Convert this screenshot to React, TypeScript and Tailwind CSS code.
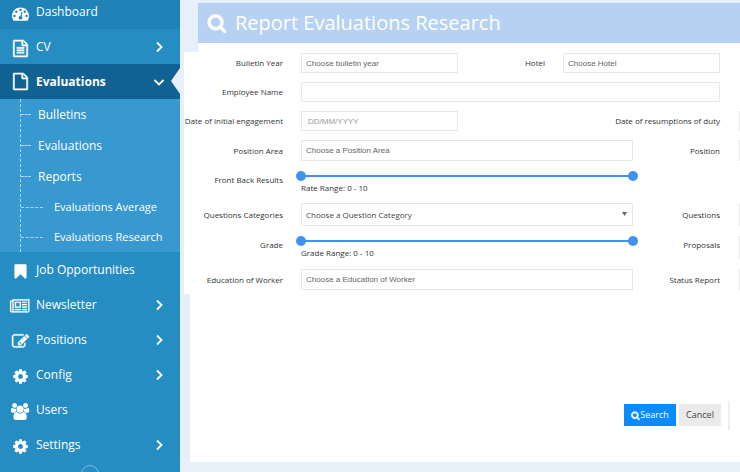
import { useState, type ReactNode } from "react";

const FILE_OUTLINE =
  "M1596 380q28 28 48 76t20 88v1152q0 40-28 68t-68 28h-1344q-40 0-68-28t-28-68v-1600q0-40 28-68t68-28h896q40 0 88 20t76 48zm-444-244v376h376q-10-29-22-41l-313-313q-12-12-41-22zm384 1528v-1024h-416q-40 0-68-28t-28-68v-416h-768v1536h1280z";

// Glyphs on a 1792 unit em; a few are wider than the em.
const ICONS = {
  dashboard: {
    width: 1792,
    d: "M384 1152q0-53-37.5-90.5t-90.5-37.5-90.5 37.5-37.5 90.5 37.5 90.5 90.5 37.5 90.5-37.5 37.5-90.5zm192-448q0-53-37.5-90.5t-90.5-37.5-90.5 37.5-37.5 90.5 37.5 90.5 90.5 37.5 90.5-37.5 37.5-90.5zm428 481l101-382q6-26-7.5-48.5t-38.5-29.5-48 6.5-30 39.5l-101 382q-60 5-107 43.5t-63 98.5q-20 77 20 146t117 89 146-20 89-117q16-60-6-117t-72-91zm660-33q0-53-37.5-90.5t-90.5-37.5-90.5 37.5-37.5 90.5 37.5 90.5 90.5 37.5 90.5-37.5 37.5-90.5zm-640-640q0-53-37.5-90.5t-90.5-37.5-90.5 37.5-37.5 90.5 37.5 90.5 90.5 37.5 90.5-37.5 37.5-90.5zm448 192q0-53-37.5-90.5t-90.5-37.5-90.5 37.5-37.5 90.5 37.5 90.5 90.5 37.5 90.5-37.5 37.5-90.5zm320 448q0 261-141 483-19 29-54 29h-1402q-35 0-54-29-141-221-141-483 0-182 71-348t191-286 286-191 348-71 348 71 286 191 191 286 71 348z",
  },
  file: { width: 1792, d: FILE_OUTLINE },
  fileText: {
    width: 1792,
    d: FILE_OUTLINE + "M512 768h768v128h-768zM512 1024h768v128h-768zM512 1280h768v128h-768z",
  },
  bookmark: {
    width: 1792,
    d: "M1420 128q23 0 44 9 33 13 52.5 41t19.5 62v1289q0 34-19.5 62t-52.5 41q-19 8-44 8-48 0-83-32l-441-424-441 424q-36 33-83 33-23 0-44-9-33-13-52.5-41t-19.5-62v-1289q0-34 19.5-62t52.5-41q21-9 44-9h1048z",
  },
  newspaper: {
    width: 2048,
    d: "M1024 512h-384v384h384v-384zm128 640v128h-640v-128h640zm0-768v640h-640v-640h640zm640 768v128h-512v-128h512zm0-256v128h-512v-128h512zm0-256v128h-512v-128h512zm0-256v128h-512v-128h512zm-1536 960v-960h-128v960q0 26 19 45t45 19 45-19 19-45zm1664 0v-1088h-1536v1088q0 33-11 64h1483q26 0 45-19t19-45zm128-1216v1216q0 80-56 136t-136 56h-1664q-80 0-136-56t-56-136v-1088h256v-128h1792z",
  },
  edit: {
    width: 1792,
    d: "M888 1184l116-116-152-152-116 116v56h96v96h56zm440-720q-16-16-33 1l-350 350q-17 17-1 33t33-1l350-350q17-17 1-33zm80 594v190q0 119-84.5 203.5t-203.5 84.5h-832q-119 0-203.5-84.5t-84.5-203.5v-832q0-119 84.5-203.5t203.5-84.5h832q63 0 117 25 15 7 18 23 3 17-9 29l-49 49q-14 14-32 8-23-6-45-6h-832q-66 0-113 47t-47 113v832q0 66 47 113t113 47h832q66 0 113-47t47-113v-126q0-13 9-22l64-64q15-15 35-7t20 29zm-96-738l288 288-672 672h-288v-288zm444 132l-92 92-288-288 92-92q28-28 68-28t68 28l152 152q28 28 28 68t-28 68z",
  },
  cog: {
    width: 1792,
    d: "M1152 896q0-106-75-181t-181-75-181 75-75 181 75 181 181 75 181-75 75-181zm512-109v222q0 12-8 23t-20 13l-185 28q-19 54-39 91 35 50 107 138 10 12 10 25t-9 23q-27 37-99 108t-94 71q-12 0-26-9l-138-108q-44 23-91 38-16 136-29 186-7 28-36 28h-222q-14 0-24.5-8.5t-11.5-21.5l-28-184q-49-16-90-37l-141 107q-10 9-25 9-14 0-25-11-126-114-165-168-7-10-7-23 0-12 8-23 15-21 51-66.5t54-70.5q-27-50-41-99l-183-27q-13-2-21-12.5t-8-23.5v-222q0-12 8-23t19-13l186-28q14-46 39-92-40-57-107-138-10-12-10-24 0-10 9-23 26-36 98.5-107.5t94.5-71.5q13 0 26 10l138 107q44-23 91-38 16-136 29-186 7-28 36-28h222q14 0 24.5 8.5t11.5 21.5l28 184q49 16 90 37l142-107q9-9 24-9 13 0 25 10 129 119 165 170 7 8 7 22 0 12-8 23-15 21-51 66.5t-54 70.5q26 50 41 98l183 28q13 2 21 12.5t8 23.5z",
  },
  users: {
    width: 1920,
    d: "M593 896q-162 5-265 128h-134q-82 0-138-40.5t-56-118.5q0-353 124-353 6 0 43.5 21t97.5 42.5 119 21.5q67 0 133-23-5 37-5 66 0 139 81 256zm1071 637q0 120-73 189.5t-194 69.5h-874q-121 0-194-69.5t-73-189.5q0-53 3.5-103.5t14-109 26.5-108.5 43-97.5 62-81 85.5-53.5 111.5-20q10 0 43 21.5t73 48 107 48 135 21.5 135-21.5 107-48 73-48 43-21.5q61 0 111.5 20t85.5 53.5 62 81 43 97.5 26.5 108.5 14 109 3.5 103.5zm-1024-1277q0 106-75 181t-181 75-181-75-75-181 75-181 181-75 181 75 75 181zm704 384q0 159-112.5 271.5t-271.5 112.5-271.5-112.5-112.5-271.5 112.5-271.5 271.5-112.5 271.5 112.5 112.5 271.5zm576 225q0 78-56 118.5t-138 40.5h-134q-103-123-265-128 81-117 81-256 0-29-5-66 66 23 133 23 59 0 119-21.5t97.5-42.5 43.5-21q124 0 124 353zm-128-609q0 106-75 181t-181 75-181-75-75-181 75-181 181-75 181 75 75 181z",
  },
  search: {
    width: 1792,
    d: "M1216 832q0-185-131.5-316.5t-316.5-131.5-316.5 131.5-131.5 316.5 131.5 316.5 316.5 131.5 316.5-131.5 131.5-316.5zm512 832q0 52-38 90t-90 38q-54 0-90-38l-343-342q-179 124-399 124-143 0-273.5-55.5t-225-150-150-225-55.5-273.5 55.5-273.5 150-225 225-150 273.5-55.5 273.5 55.5 225 150 150 225 55.5 273.5q0 220-124 399l343 343q37 37 37 90z",
  },
};

type IconName = keyof typeof ICONS;

interface IconProps {
  name: IconName;
  className: string;
  weight?: number;
}

// weight thickens the glyph, in em units, so that outlines hold up at small sizes.
function Icon({ name, className, weight = 0 }: IconProps) {
  const { width, d } = ICONS[name];
  return (
    <svg
      viewBox={`0 0 ${width} 1792`}
      className={`overflow-visible ${className}`}
      fill="currentColor"
      stroke="currentColor"
      strokeWidth={weight}
      aria-hidden
    >
      <path d={d} />
    </svg>
  );
}

function Chevron({ down }: { down?: boolean }) {
  return (
    <svg viewBox="0 0 12 12" className="size-3 shrink-0" fill="none" stroke="currentColor" strokeWidth={1.8} aria-hidden>
      <path d={down ? "M1.5 4l4.5 4.5L10.5 4" : "M4 1.5l4.5 4.5L4 10.5"} />
    </svg>
  );
}

interface NavItemProps {
  icon: IconName;
  label: string;
  weight?: number;
  expandable?: boolean;
}

function NavItem({ icon, label, weight, expandable }: NavItemProps) {
  return (
    <a href="#" className="flex h-[35px] items-center pr-[15px] hover:bg-[#1f83b7]">
      <span className="flex w-9 shrink-0 justify-center pt-[3px] pl-1">
        <Icon name={icon} weight={weight} className="h-[17px] w-auto" />
      </span>
      <span className="flex-1">{label}</span>
      {expandable && <Chevron />}
    </a>
  );
}

function SubItem({ label, nested }: { label: string; nested?: boolean }) {
  return (
    <a href="#" className={nested ? "flex h-[30px] items-center" : "flex h-[31px] items-center"}>
      <span
        className={
          nested
            ? "mr-[11px] w-[22px] border-t border-dashed border-white/60"
            : "mr-[7px] w-[10px] border-t border-dashed border-white/60"
        }
      />
      <span className={nested ? "text-[11px]" : ""}>{label}</span>
    </a>
  );
}

function Sidebar() {
  return (
    <nav className="w-[180px] shrink-0 overflow-hidden bg-[#258dc1] text-[12px] leading-4 text-white">
      <div className="-mt-[6px]">
        <NavItem icon="dashboard" label="Dashboard" />
      </div>
      <NavItem icon="fileText" label="CV" weight={60} expandable />
      <a href="#" aria-expanded className="relative flex h-[35px] items-center bg-[#0f6291] pr-[15px] font-bold">
        <span className="flex w-9 shrink-0 justify-center pl-1">
          <Icon name="file" weight={60} className="h-[17px] w-auto" />
        </span>
        <span className="flex-1">Evaluations</span>
        <Chevron down />
        <svg viewBox="0 0 9 26" className="absolute top-1 right-0 h-[26px] w-[9px]" fill="#e7eff9" aria-hidden>
          <path d="M9 0v26L0 13z" />
        </svg>
      </a>
      <div className="bg-[#3799cf] pl-5">
        <div className="border-l border-dashed border-white/60">
          <SubItem label="Bulletins" />
          <SubItem label="Evaluations" />
          <SubItem label="Reports" />
          <SubItem label="Evaluations Average" nested />
          <SubItem label="Evaluations Research" nested />
        </div>
      </div>
      <NavItem icon="bookmark" label="Job Opportunities" />
      <NavItem icon="newspaper" label="Newsletter" weight={20} expandable />
      <NavItem icon="edit" label="Positions" weight={40} expandable />
      <NavItem icon="cog" label="Config" expandable />
      <NavItem icon="users" label="Users" />
      <NavItem icon="cog" label="Settings" expandable />
      <button
        type="button"
        aria-label="Collapse menu"
        className="mx-auto mt-[3px] block size-[18px] rounded-full border border-white/40"
      />
    </nav>
  );
}

const LABEL = "text-right whitespace-nowrap text-[#333]";
const FIELD =
  "block h-full w-full min-w-0 border border-[#e8e8e8] bg-white px-1 font-['Liberation_Sans',sans-serif] text-[8px] text-[#555] placeholder:text-[#666] outline-none";

// Right-hand column continues past the edge of the window.
function EdgeField({ id }: { id: string }) {
  return (
    <div className="h-full max-h-[23px] overflow-hidden pl-px">
      <input id={id} type="text" className="block h-full w-40 border border-[#e8e8e8] bg-[#eee]" />
    </div>
  );
}

interface RowProps {
  id: string;
  label: string;
  sideLabel?: string;
  className: string;
  children: ReactNode;
}

function SplitRow({ id, label, sideLabel, className, children }: RowProps) {
  return (
    <div className={`grid grid-cols-[99px_1fr_69px_2px] gap-x-[18px] ${className}`}>
      <label htmlFor={id} className={LABEL}>
        {label}
      </label>
      {children}
      {sideLabel && (
        <>
          <label htmlFor={`${id}-side`} className={LABEL}>
            {sideLabel}
          </label>
          <EdgeField id={`${id}-side`} />
        </>
      )}
    </div>
  );
}

const THUMB =
  "pointer-events-none absolute inset-0 m-0 h-full w-full appearance-none bg-transparent [&::-webkit-slider-thumb]:pointer-events-auto [&::-webkit-slider-thumb]:size-[10px] [&::-webkit-slider-thumb]:appearance-none [&::-webkit-slider-thumb]:rounded-full [&::-webkit-slider-thumb]:bg-[#3f92f0]";

function RangeField({ id, caption }: { id: string; caption: string }) {
  const [low, setLow] = useState(0);
  const [high, setHigh] = useState(10);

  return (
    <div>
      <div className="relative -mx-[5px] flex h-[10px] items-center px-[5px]">
        <div className="h-0.5 w-full bg-[#3f92f0]" />
        <input
          id={id}
          type="range"
          min={0}
          max={10}
          value={low}
          onChange={(e) => setLow(Math.min(Number(e.target.value), high))}
          className={THUMB}
        />
        <input
          type="range"
          min={0}
          max={10}
          value={high}
          aria-label={`${caption} maximum`}
          onChange={(e) => setHigh(Math.max(Number(e.target.value), low))}
          className={THUMB}
        />
      </div>
      <p className="mt-px text-[#333]">
        {caption}: {low} - {high}
      </p>
    </div>
  );
}

function SearchForm() {
  return (
    <form className="flex flex-1 flex-col text-[8px] leading-3">
      <div className="ml-1 bg-white pt-px pb-1">
        <div className="mb-[9px] grid h-5 grid-cols-[99px_1fr_69px_1fr] items-center gap-x-[18px] pr-5">
          <label htmlFor="year" className={LABEL}>
            Bulletin Year
          </label>
          <input id="year" type="text" placeholder="Choose bulletin year" className={FIELD} />
          <label htmlFor="hotel" className={LABEL}>
            Hotel
          </label>
          <input id="hotel" type="text" placeholder="Choose Hotel" className={FIELD} />
        </div>
        <div className="mb-[9px] grid h-5 grid-cols-[99px_1fr] items-center gap-x-[18px] pr-5">
          <label htmlFor="employee" className={LABEL}>
            Employee Name
          </label>
          <input id="employee" type="text" className={FIELD} />
        </div>
        <div className="mb-[9px] grid h-5 grid-cols-[99px_157fr_244fr_2px] items-center gap-x-[18px]">
          <label htmlFor="engaged" className="flex justify-end whitespace-nowrap text-[#333]">
            Date of initial engagement
          </label>
          <input id="engaged" type="text" placeholder="DD/MM/YYYY" className={`${FIELD} indent-[2px] placeholder:text-[#999]`} />
          <label htmlFor="resumed" className={LABEL}>
            Date of resumptions of duty
          </label>
          <EdgeField id="resumed" />
        </div>
        <SplitRow id="area" label="Position Area" sideLabel="Position" className="h-[21px] items-center">
          <input id="area" type="text" placeholder="Choose a Position Area" className={FIELD} />
        </SplitRow>
        <SplitRow id="rate" label="Front Back Results" className="h-[42px] items-start pt-[10px] [&>label]:pt-[3px]">
          <RangeField id="rate" caption="Rate Range" />
        </SplitRow>
        <SplitRow id="category" label="Questions Categories" sideLabel="Questions" className="h-[23px] items-center">
          <div className="relative h-full">
            <select
              id="category"
              className="block h-full w-full appearance-none border border-[#e8e8e8] bg-white px-1 text-[8px] text-[#444] outline-none"
            >
              <option>Choose a Question Category</option>
            </select>
            <svg viewBox="0 0 5 4" className="pointer-events-none absolute top-[9px] right-[6px] h-1 w-[5px]" fill="#666" aria-hidden>
              <path d="M0 0h5L2.5 4z" />
            </svg>
          </div>
        </SplitRow>
        <SplitRow id="grade" label="Grade" sideLabel="Proposals" className="h-[43px] items-start pt-[10px] [&>label]:pt-[3px]">
          <RangeField id="grade" caption="Grade Range" />
        </SplitRow>
        <SplitRow id="education" label="Education of Worker" sideLabel="Status Report" className="h-[21px] items-center">
          <input id="education" type="text" placeholder="Choose a Education of Worker" className={FIELD} />
        </SplitRow>
      </div>
      <div className="mb-[10px] ml-[10px] flex flex-1 items-start justify-end bg-white pt-[107px] pr-[10px] text-[9px]">
        <button type="submit" className="mt-[3px] flex h-[22px] w-[52px] items-center justify-center bg-[#0a8cff] text-white">
          <Icon name="search" weight={120} className="size-[9px]" />
          Search
        </button>
        <button type="button" className="mt-[3px] ml-[3px] h-[22px] w-[42px] bg-[#eaeaea] text-[#444]">
          Cancel
        </button>
        <div className="ml-[7px] h-[29px] w-0.5 bg-[#e7eff9]" />
      </div>
    </form>
  );
}

export default function App() {
  return (
    <div className="flex h-screen overflow-hidden bg-[#e7eff9] font-['Open_Sans',sans-serif]">
      <Sidebar />
      <main className="flex min-w-0 flex-1 flex-col">
        <header className="mt-[3px] ml-[18px] flex h-10 items-center gap-2 bg-[#b7d1f2] pl-[9px] text-white">
          <Icon name="search" weight={60} className="size-5" />
          <h1 className="text-[20px] leading-7">Report Evaluations Research</h1>
        </header>
        <div className="ml-[18px] h-[9px] bg-white" />
        <SearchForm />
      </main>
    </div>
  );
}
